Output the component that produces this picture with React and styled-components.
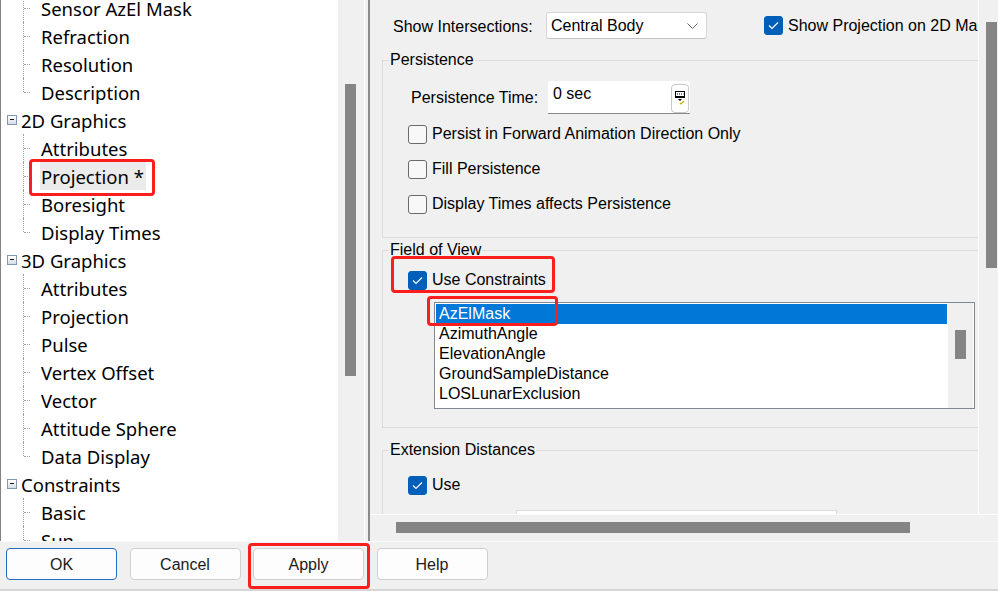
import React from 'react';
import styled, { createGlobalStyle } from 'styled-components';

const GlobalStyle = createGlobalStyle`
  html, body {
    margin: 0;
    padding: 0;
    background: #f0f0f0;
  }
  body {
    width: 998px;
    height: 591px;
    overflow: hidden;
  }
  * {
    box-sizing: border-box;
  }
`;

const RED = '#fa1e1e';

const Window = styled.div`
  width: 998px;
  height: 591px;
  display: flex;
  flex-direction: column;
  background: #f0f0f0;
  font-family: "Liberation Sans", Arial, sans-serif;
  font-size: 16px;
  color: #000;
  overflow: hidden;
`;

const Main = styled.div`
  display: flex;
  height: 541px;
`;

/* ---------- tree ---------- */

const TreePane = styled.div`
  width: 364px;
  display: flex;
  background: #fff;
  border-left: 1px solid #828282;
`;

const TreeScroll = styled.div`
  flex: 1;
  overflow: hidden;
  font-family: "Noto Sans", "Open Sans", sans-serif;
  font-size: 18.5px;
`;

const TreeList = styled.div`
  margin-top: -6px;
`;

const RootRow = styled.div`
  height: 28px;
  display: flex;
  align-items: center;
  padding-left: 6px;
  white-space: nowrap;
`;

const Expander = styled.span`
  width: 10px;
  height: 10px;
  margin-right: 4px;
  border: 1px solid #8198b0;
  background: linear-gradient(#ffffff, #d5dde6);
  position: relative;
  &::after {
    content: '';
    position: absolute;
    left: 2px;
    top: 3px;
    width: 4px;
    height: 1px;
    background: #1a1a1a;
  }
`;

const ChildRow = styled.div`
  height: 28px;
  display: flex;
  align-items: center;
  padding-left: 40px;
  position: relative;
  white-space: nowrap;
  &::before {
    content: '';
    position: absolute;
    left: 22px;
    top: 0;
    height: ${(p) => (p.$last ? '14px' : '28px')};
    border-left: 1px dotted #a0a0a0;
  }
  &::after {
    content: '';
    position: absolute;
    left: 23px;
    top: 14px;
    width: 6px;
    border-top: 1px dotted #a0a0a0;
  }
`;

const ItemText = styled.span`
  display: inline-flex;
  align-items: center;
  height: 28px;
  padding: 0 2px 0 1px;
  margin-left: -1px;
  position: relative;
  background: ${(p) => (p.$selected ? '#ebebeb' : 'transparent')};
`;

const RedMark = styled.span`
  position: absolute;
  left: ${(p) => p.$l}px;
  top: ${(p) => p.$t}px;
  width: ${(p) => p.$w}px;
  height: ${(p) => p.$h}px;
  border: 3px solid ${RED};
  border-radius: 4px;
  pointer-events: none;
  z-index: 5;
`;

const TreeScrollbar = styled.div`
  width: 26px;
  background: #f0f0f0;
  padding: 84px 0 0 7px;
`;

const Thumb = styled.div`
  width: 11px;
  height: ${(p) => p.$h}px;
  background: #858585;
`;

const Splitter = styled.div`
  width: 6px;
  border-left: 1px solid #fff;
  border-right: 2px solid #8a8a8a;
  background: #f0f0f0;
`;

/* ---------- right pane ---------- */

const RightPane = styled.div`
  width: 628px;
  display: flex;
  flex-direction: column;
`;

const ViewRow = styled.div`
  height: 515px;
  display: flex;
  border-bottom: 1px solid #fff;
`;

const Viewport = styled.div`
  width: 609px;
  overflow: hidden;
  border-right: 1px solid #fff;
`;

const VScroll = styled.div`
  flex: 1;
  padding: 22px 0 0 7px;
`;

const HScroll = styled.div`
  height: 26px;
  padding: 7px 0 0 26px;
`;

const HThumb = styled.div`
  width: 514px;
  height: 11px;
  background: #858585;
`;

const Content = styled.div`
  width: 720px;
  padding: 12px 0 0 12px;
`;

const TopRow = styled.div`
  display: flex;
  align-items: center;
  height: 27px;
  padding-left: 11px;
`;

const FieldLabel = styled.span`
  width: ${(p) => p.$w}px;
  flex-shrink: 0;
  white-space: nowrap;
  padding-top: ${(p) => p.$pt || 0}px;
`;

const Select = styled.div`
  width: 161px;
  height: 27px;
  display: flex;
  align-items: center;
  justify-content: space-between;
  padding: 0 8px 0 4px;
  background: #fff;
  border: 1px solid #d6d6d6;
  border-bottom-color: #c4c4c4;
  border-radius: 3px;
`;

const Group = styled.fieldset`
  margin: ${(p) => p.$mt}px 0 0 0;
  padding: 0;
  border: 1px solid #dcdcdc;
  min-width: 0;
`;

const Legend = styled.legend`
  margin-left: 6px;
  padding: 0 1px;
  line-height: 18px;
  font-size: 16px;
`;

const GroupBody = styled.div`
  padding: ${(p) => p.$pad};
`;

const CheckRow = styled.div`
  display: flex;
  align-items: center;
  gap: 5px;
  height: 20px;
  position: relative;
  white-space: nowrap;
  margin-left: ${(p) => p.$ml || 0}px;
`;

const Box = styled.span`
  width: 19px;
  height: 19px;
  flex-shrink: 0;
  border-radius: 3px;
  display: flex;
  align-items: center;
  justify-content: center;
  background: ${(p) => (p.$on ? '#005fb8' : '#f8f8f8')};
  border: 1px solid ${(p) => (p.$on ? '#005fb8' : '#6a6a6a')};
`;

const CheckStack = styled.div`
  display: flex;
  flex-direction: column;
  gap: 15px;
  margin-top: 10px;
`;

const TimeRow = styled.div`
  display: flex;
  align-items: center;
  height: 33px;
  padding-left: 3px;
`;

const TimeInput = styled.div`
  width: 142px;
  height: 33px;
  display: flex;
  background: #fff;
  border-bottom: 1px solid #8a8a8a;
  border-radius: 3px 3px 0 0;
`;

const TimeValue = styled.span`
  padding: 4px 0 0 5px;
  line-height: 18px;
`;

const SpinButton = styled.span`
  width: 18px;
  height: 29px;
  margin: 3px 1px 0 auto;
  border: 1px solid #c9c9c9;
  border-radius: 4px;
  background: #fff;
  display: flex;
  justify-content: center;
  padding-top: 6px;
`;

const ListBox = styled.div`
  width: 541px;
  height: 107px;
  margin: 12px 0 0 26px;
  display: flex;
  background: #fff;
  border: 1px solid #828790;
`;

const ListItems = styled.div`
  flex: 1;
  padding: 1px;
`;

const ListItem = styled.div`
  height: 20px;
  line-height: 20px;
  padding-left: 3px;
  position: relative;
  white-space: nowrap;
  background: ${(p) => (p.$selected ? '#0078d7' : 'transparent')};
  color: ${(p) => (p.$selected ? '#fff' : '#000')};
`;

const ListScroll = styled.div`
  width: 26px;
  background: #f0f0f0;
  border-right: 1px solid #fff;
  padding: 27px 0 0 7px;
`;

const ExtInput = styled.div`
  width: 321px;
  height: 28px;
  margin: 15px 0 0 108px;
  background: #fff;
  border: 1px solid #dcdcdc;
`;

/* ---------- bottom bar ---------- */

const BottomBar = styled.div`
  height: 50px;
  display: flex;
  gap: 12.5px;
  padding: 6px 0 0 6px;
  border-top: 1px solid #fafafa;
  border-bottom: 2px solid #d6d6d6;
`;

const ButtonWrap = styled.div`
  position: relative;
`;

const Button = styled.div`
  width: 111px;
  height: 32px;
  display: flex;
  align-items: center;
  justify-content: center;
  padding-top: 1px;
  background: #fdfdfd;
  border: 1px solid ${(p) => (p.$primary ? '#1f6fc0' : '#d0d0d0')};
  border-radius: 4px;
  color: #1b1b1b;
`;

const Check = () => (
  <svg width="11" height="9" viewBox="0 0 11 9">
    <path d="M1 4.5 L4 7.5 L10 1.5" fill="none" stroke="#fff" strokeWidth="1.1" />
  </svg>
);

const CheckBox = ({ on, label, children, ml }) => (
  <CheckRow $ml={ml}>
    <Box $on={on}>{on && <Check />}</Box>
    <span>{label}</span>
    {children}
  </CheckRow>
);

const Chevron = () => (
  <svg width="11" height="6" viewBox="0 0 11 6">
    <path d="M0.5 0.5 L5.5 5.5 L10.5 0.5" fill="none" stroke="#606060" strokeWidth="1" />
  </svg>
);

const SpinIcon = () => (
  <svg width="10" height="14" viewBox="0 0 10 14">
    <rect x="0.5" y="0.5" width="9" height="5" fill="#fff" stroke="#000" />
    <path d="M2 3h1M4 3h1M6 3h1M8 3h0.5" stroke="#000" />
    <rect x="0" y="5" width="10" height="2" fill="#000" />
    <path d="M3 8 L7 8 L5 10 Z" fill="#000" />
    <path d="M5 12 L6 13 L9 10" fill="none" stroke="#c8b400" strokeWidth="1.2" />
  </svg>
);

const tree = [
  { children: ['Sensor AzEl Mask', 'Refraction', 'Resolution', 'Description'] },
  { label: '2D Graphics', children: ['Attributes', 'Projection *', 'Boresight', 'Display Times'] },
  {
    label: '3D Graphics',
    children: ['Attributes', 'Projection', 'Pulse', 'Vertex Offset', 'Vector', 'Attitude Sphere', 'Data Display'],
  },
  { label: 'Constraints', children: ['Basic', 'Sun'], open: true },
];

const constraints = ['AzElMask', 'AzimuthAngle', 'ElevationAngle', 'GroundSampleDistance', 'LOSLunarExclusion'];

export default function App() {
  return (
    <Window>
      <GlobalStyle />
      <Main>
        <TreePane>
          <TreeScroll>
            <TreeList>
              {tree.map((g, gi) => (
                <React.Fragment key={gi}>
                  {g.label && (
                    <RootRow>
                      <Expander />
                      {g.label}
                    </RootRow>
                  )}
                  {g.children.map((c, ci) => {
                    const sel = c === 'Projection *';
                    return (
                      <ChildRow key={ci} $last={!g.open && ci === g.children.length - 1}>
                        <ItemText $selected={sel}>
                          {c}
                          {sel && <RedMark $l={-11} $t={-3} $w={126} $h={37} />}
                        </ItemText>
                      </ChildRow>
                    );
                  })}
                </React.Fragment>
              ))}
            </TreeList>
          </TreeScroll>
          <TreeScrollbar>
            <Thumb $h={292} />
          </TreeScrollbar>
        </TreePane>
        <Splitter />
        <RightPane>
          <ViewRow>
            <Viewport>
              <Content>
                <TopRow>
                  <FieldLabel $w={153} $pt={2}>Show Intersections:</FieldLabel>
                  <Select>
                    <span>Central Body</span>
                    <Chevron />
                  </Select>
                  <CheckBox on label="Show Projection on 2D Map" ml={57} />
                </TopRow>

                <Group $mt={12}>
                  <Legend>Persistence</Legend>
                  <GroupBody $pad="12px 0 23px 25px">
                    <TimeRow>
                      <FieldLabel $w={137}>Persistence Time:</FieldLabel>
                      <TimeInput>
                        <TimeValue>0 sec</TimeValue>
                        <SpinButton>
                          <SpinIcon />
                        </SpinButton>
                      </TimeInput>
                    </TimeRow>
                    <CheckStack>
                      <CheckBox label="Persist in Forward Animation Direction Only" />
                      <CheckBox label="Fill Persistence" />
                      <CheckBox label="Display Times affects Persistence" />
                    </CheckStack>
                  </GroupBody>
                </Group>

                <Group $mt={3}>
                  <Legend>Field of View</Legend>
                  <GroupBody $pad="11px 0 18px 25px">
                    <CheckBox on label="Use Constraints">
                      <RedMark $l={-17} $t={-14} $w={164} $h={37} />
                    </CheckBox>
                    <ListBox>
                      <ListItems>
                        {constraints.map((c, i) => (
                          <ListItem key={c} $selected={i === 0}>
                            {c}
                            {i === 0 && <RedMark $l={-9} $t={-8} $w={131} $h={30} />}
                          </ListItem>
                        ))}
                      </ListItems>
                      <ListScroll>
                        <Thumb $h={29} />
                      </ListScroll>
                    </ListBox>
                  </GroupBody>
                </Group>

                <Group $mt={13}>
                  <Legend>Extension Distances</Legend>
                  <GroupBody $pad="16px 0 30px 25px">
                    <CheckBox on label="Use" />
                    <ExtInput />
                  </GroupBody>
                </Group>
              </Content>
            </Viewport>
            <VScroll>
              <Thumb $h={246} />
            </VScroll>
          </ViewRow>
          <HScroll>
            <HThumb />
          </HScroll>
        </RightPane>
      </Main>
      <BottomBar>
        <Button $primary>OK</Button>
        <Button>Cancel</Button>
        <ButtonWrap>
          <Button>Apply</Button>
          <RedMark $l={-5} $t={-5} $w={122} $h={46} />
        </ButtonWrap>
        <Button>Help</Button>
      </BottomBar>
    </Window>
  );
}
